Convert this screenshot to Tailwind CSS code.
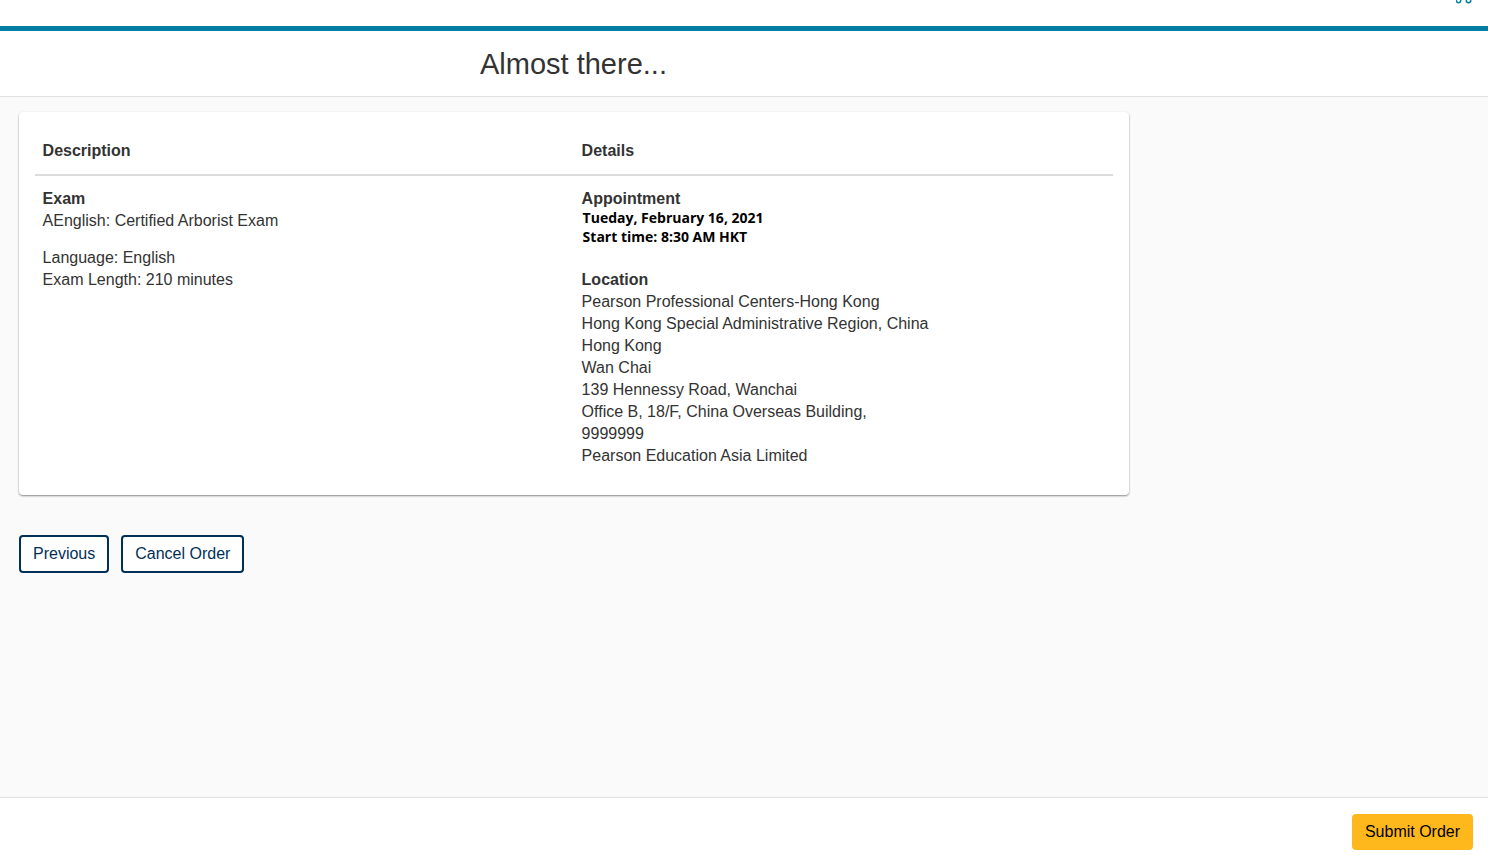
<!DOCTYPE html>
<html>
<head>
    <title>Almost there</title>
    <meta charset="UTF-8">
    <meta name="viewport" content="width=device-width, initial-scale=1.0">
    <script src="https://cdn.jsdelivr.net/npm/@tailwindcss/browser@4"></script>
</head>
<body class="bg-[#fafafa] font-['Liberation_Sans',sans-serif] text-[16px] leading-[22px] text-[#333333]">
    <div class="flex flex-col h-[864px] overflow-hidden">
        <!-- Top bar -->
        <div class="h-[26px] bg-white flex justify-end pr-[16px] shrink-0">
            <svg class="w-[16px] h-[4px]" viewBox="0 0 16 4" fill="none" stroke="#007fa3" stroke-width="1.5">
                <circle cx="2.5" cy="0.5" r="2.2"></circle>
                <circle cx="12.5" cy="0.5" r="2.2"></circle>
            </svg>
        </div>
        <div class="h-[5px] bg-[#007fa3] shrink-0"></div>

        <!-- Title -->
        <div class="h-[66px] bg-white border-b border-[#e0e0e0] pl-[480px] pt-[15px] shrink-0">
            <h1 class="text-[29px] leading-[36px] font-normal">Almost there...</h1>
        </div>

        <!-- Content -->
        <main class="flex-1 pt-[15px] pl-[19px]">
            <div class="w-[1110px] h-[383px] bg-white rounded-[4px] shadow-[0_1px_2px_rgba(0,0,0,0.45)] px-[16px] pt-[28px]">
                <div class="grid grid-cols-[539px_1fr] h-[36px] border-b-2 border-[#dddddd] pl-[7.6px] pr-[8px] font-bold">
                    <div>Description</div>
                    <div>Details</div>
                </div>
                <div class="grid grid-cols-[539px_1fr] pl-[7.6px] pr-[8px] pt-[12px]">
                    <div>
                        <p class="font-bold">Exam</p>
                        <p>AEnglish: Certified Arborist Exam</p>
                        <p class="mt-[15px]">Language: English</p>
                        <p>Exam Length: 210 minutes</p>
                    </div>
                    <div>
                        <p class="font-bold">Appointment</p>
                        <div class="-mt-[2px] pl-px font-['Open_Sans',sans-serif] font-bold text-[14px] leading-[19px] text-black">
                            <p>Tueday, February 16, 2021</p>
                            <p>Start time: 8:30 AM HKT</p>
                        </div>
                        <p class="font-bold mt-[23px]">Location</p>
                        <p>Pearson Professional Centers-Hong Kong</p>
                        <p>Hong Kong Special Administrative Region, China</p>
                        <p>Hong Kong</p>
                        <p>Wan Chai</p>
                        <p>139 Hennessy Road, Wanchai</p>
                        <p>Office B, 18/F, China Overseas Building,</p>
                        <p>9999999</p>
                        <p>Pearson Education Asia Limited</p>
                    </div>
                </div>
            </div>

            <div class="flex gap-[12px] mt-[40px]">
                <button class="h-[38px] px-[12px] border-2 border-[#003057] rounded-[4px] bg-white text-[#003057]">Previous</button>
                <button class="h-[38px] px-[12px] border-2 border-[#003057] rounded-[4px] bg-white text-[#003057]">Cancel Order</button>
            </div>
        </main>

        <!-- Footer -->
        <footer class="h-[67px] bg-white border-t border-[#e0e0e0] flex justify-end items-start pt-[16px] pr-[15px] shrink-0">
            <button class="h-[36px] w-[121px] rounded-[4px] bg-[#ffb81c] text-black">Submit Order</button>
        </footer>
    </div>
</body>
</html>
